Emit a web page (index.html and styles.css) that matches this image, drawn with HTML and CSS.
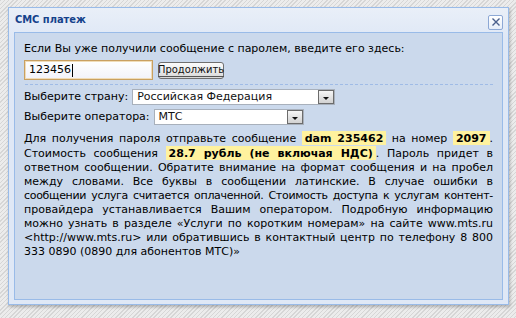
FILE: index.html
```html
<!DOCTYPE html>
<html lang="ru">
<head>
<meta charset="utf-8">
<title>СМС платеж</title>
<link rel="stylesheet" href="styles.css">
</head>
<body>
<div class="window">
  <div class="header">
    <span class="title">СМС платеж</span>
    <span class="close">
      <svg width="10" height="10" viewBox="0 0 10 10"><path d="M1.5 1.5 L8.5 8.5 M8.5 1.5 L1.5 8.5" stroke="#4a5f8c" stroke-width="1.4" fill="none"/></svg>
    </span>
  </div>
  <div class="body">
    <div class="line">Если Вы уже получили сообщение с паролем, введите его здесь:</div>
    <div class="input-row">
      <div class="input"><span>123456</span><span class="caret"></span></div>
      <div class="button"><span>Продолжить</span></div>
    </div>
    <div class="sep"></div>
    <div class="field-row">
      <span class="label">Выберите страну:</span>
      <div class="select country"><span class="value">Российская Федерация</span><span class="arrow"></span></div>
    </div>
    <div class="field-row">
      <span class="label">Выберите оператора:</span>
      <div class="select operator"><span class="value">МТС</span><span class="arrow"></span></div>
    </div>
    <p class="info">
      <span class="ln first">Для получения пароля отправьте сообщение <b class="hl">dam 235462</b> на номер <b class="hl">2097</b>.</span>
      <span class="ln">Стоимость сообщения <b class="hl">28.7 рубль (не включая НДС)</b>. Пароль придет в</span>
      <span class="ln">ответном сообщении. Обратите внимание на формат сообщения и на пробел</span>
      <span class="ln">между словами. Все буквы в сообщении латинские. В случае ошибки в</span>
      <span class="ln tight">сообщении услуга считается оплаченной. Стоимость доступа к услугам контент-</span>
      <span class="ln">провайдера устанавливается Вашим оператором. Подробную информацию</span>
      <span class="ln">можно узнать в разделе «Услуги по коротким номерам» на сайте www.mts.ru</span>
      <span class="ln">&lt;http://www.mts.ru&gt; или обратившись в контактный центр по телефону 8 800</span>
      <span class="ln last">333 0890 (0890 для абонентов МТС)»</span>
    </p>
  </div>
</div>
</body>
</html>
```
FILE: styles.css
```css
html, body {
  margin: 0;
  padding: 0;
}
body {
  width: 516px;
  height: 318px;
  overflow: hidden;
  background-color: #e4e4e4;
  background-image: repeating-linear-gradient(135deg, #d6d6d6 0px, #d6d6d6 1px, #ececec 1px, #ececec 3px);
  font-family: "DejaVu Sans", sans-serif;
  font-size: 11px;
  color: #000;
  padding-top: 7px;
  padding-left: 8px;
  box-sizing: border-box;
}
.window {
  width: 501px;
  height: 298px;
  box-sizing: border-box;
  border: 1px solid #99bbe8;
  background: linear-gradient(#e9eff8, #dfe8f6 30px, #dfe8f6);
  padding: 0 5px 4px 5px;
  display: flex;
  flex-direction: column;
  box-shadow: 1px 2px 3px rgba(0,0,0,0.25);
}
.header {
  height: 24px;
  display: flex;
  align-items: center;
  justify-content: space-between;
  flex-shrink: 0;
}
.title {
  font-weight: bold;
  color: #15428b;
  padding-left: 1px;
  margin-top: -1px;
  font-family: "DejaVu Sans Condensed", "DejaVu Sans", sans-serif;
}
.close {
  width: 13px;
  height: 13px;
  border: 1px solid #8da8d5;
  border-radius: 2px;
  background: linear-gradient(#ffffff, #e6edf8);
  display: flex;
  align-items: center;
  justify-content: center;
  margin-top: 4px;
}
.body {
  flex: 1;
  border: 1px solid #99bbe8;
  background: #cbd9ec;
  padding: 9px 9px 0 9px;
}
.line {
  line-height: 14px;
  height: 14px;
}
.input-row {
  display: flex;
  align-items: center;
  gap: 5px;
  margin-top: 4px;
}
.input {
  width: 129px;
  height: 20px;
  box-sizing: border-box;
  border: 1px solid #c9a061;
  box-shadow: inset 0 0 0 1px #f0dcb8;
  background: linear-gradient(#ffffff, #f2f2fa);
  display: flex;
  align-items: center;
  padding-left: 4px;
  line-height: 14px;
}
.caret {
  width: 1px;
  height: 13px;
  background: #000;
  margin-left: 1px;
}
.button {
  width: 66px;
  height: 17px;
  box-sizing: border-box;
  border: 1px solid #6f6f6f;
  border-radius: 3px;
  background: linear-gradient(#fbfbfb, #e8e8e8 60%, #d6d6d6);
  display: flex;
  align-items: center;
  justify-content: center;
  color: #111;
  font-family: "DejaVu Sans Condensed", "DejaVu Sans", sans-serif;
}
.button span {
  border-bottom: 1px solid #555;
  line-height: 12px;
}
.sep {
  height: 0;
  border-top: 1px dashed #9fbbe6;
  margin: 4px 0 0 1px;
  width: 468px;
}
.field-row {
  display: flex;
  align-items: center;
  gap: 4px;
  height: 16px;
  margin-top: 4px;
}
.label {
  line-height: 14px;
}
.select {
  height: 16px;
  box-sizing: border-box;
  border: 1px solid #a8b0bb;
  background: #fff;
  display: flex;
  align-items: center;
  justify-content: space-between;
  padding-left: 4px;
}
.country { width: 203px; }
.operator { width: 150px; }
.value {
  line-height: 14px;
  color: #111;
}
.arrow {
  width: 16px;
  height: 14px;
  box-sizing: border-box;
  border: 1px solid #6c6c6c;
  background: linear-gradient(#f6f6f6, #d2d2d2);
  position: relative;
}
.arrow::after {
  content: "";
  position: absolute;
  left: 4px;
  top: 6px;
  border-left: 3px solid transparent;
  border-right: 3px solid transparent;
  border-top: 3px solid #111;
}
.info {
  margin: 7px 0 0 0;
  width: 469px;
  line-height: 14px;
}
.ln {
  display: block;
  white-space: nowrap;
  text-align: justify;
  text-align-last: justify;
}
.ln.tight {
  letter-spacing: -0.3px;
}
.ln.first {
  margin-bottom: 1px;
}
.ln.last {
  text-align-last: left;
}
.hl {
  background: #fff29e;
  padding: 1px 3px 0 3px;
}
```
